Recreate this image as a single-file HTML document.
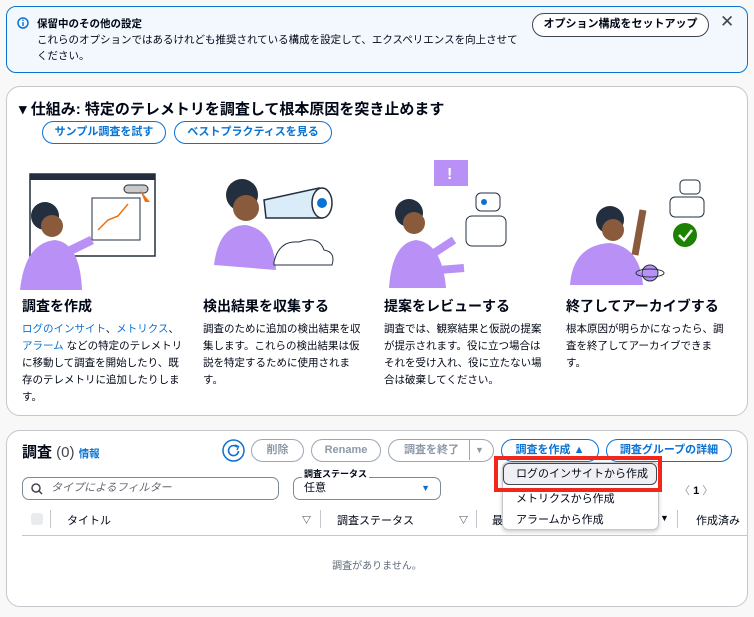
<!DOCTYPE html>
<html><head><meta charset="utf-8"><style>
*{box-sizing:border-box;margin:0;padding:0}
body{width:754px;height:617px;background:#f8f8f8;font-family:"Liberation Sans","Noto Sans CJK JP",sans-serif;color:#000716;position:relative;overflow:hidden}
.abs{position:absolute}
.banner{left:6px;top:6px;width:742px;height:67px;background:#f2f8fd;border:1px solid #0972d3;border-radius:10px}
.card{background:#fff;border:1px solid #c6c6cd;border-radius:14px}
.btn{position:absolute;border:1.5px solid #0972d3;color:#0972d3;border-radius:16px;font-size:11px;font-weight:bold;text-align:center;background:#fff;height:23px;line-height:20px}
.dis{border-color:#9ba7b6;color:#8d99a8;font-weight:bold}
.t{font-size:14px;font-weight:bold;position:absolute}
.d{font-size:10.5px;line-height:17px;position:absolute;width:165px;color:#000716}
a{color:#0972d3;text-decoration:none}
</style></head><body>
<div class="abs banner"></div>
<svg class="abs" style="left:17px;top:17px" width="12" height="12"><circle cx="6" cy="6" r="5" fill="none" stroke="#0972d3" stroke-width="1.5"/><rect x="5.3" y="5" width="1.4" height="4" fill="#0972d3"/><rect x="5.3" y="2.6" width="1.4" height="1.4" fill="#0972d3"/></svg>
<div class="abs" style="left:37px;top:16px;font-size:10.5px;font-weight:bold">保留中のその他の設定</div>
<div class="abs" style="left:37px;top:32px;font-size:10.5px;line-height:16px;white-space:nowrap">これらのオプションではあるけれども推奨されている構成を設定して、エクスペリエンスを向上させて<br>ください。</div>
<div class="abs" style="left:532px;top:13px;width:177px;height:24px;border:1.5px solid #424650;border-radius:14px;font-size:11px;font-weight:bold;text-align:center;line-height:21px;color:#000716;background:#fff">オプション構成をセットアップ</div>
<div class="abs" style="left:720px;top:12px;font-size:17px;color:#424650">✕</div>

<div class="abs card" style="left:6px;top:86px;width:742px;height:330px"></div>
<div class="abs" style="left:19px;top:98px;font-size:15px;font-weight:bold">▾ 仕組み: 特定のテレメトリを調査して根本原因を突き止めます</div>
<div class="btn" style="left:42px;top:121px;width:124px">サンプル調査を試す</div>
<div class="btn" style="left:174px;top:121px;width:158px">ベストプラクティスを見る</div>

<svg class="abs" style="left:20px;top:168px" width="165" height="122">
<rect x="10" y="6" width="125" height="82" fill="#fff" stroke="#232f3e" stroke-width="1.5"/><rect x="10" y="6" width="125" height="6" fill="#232f3e"/>
<rect x="104" y="17" width="24" height="8" rx="4" fill="#c9c9c9" stroke="#232f3e"/>
<rect x="72" y="30" width="48" height="42" fill="#fff" stroke="#232f3e"/><polyline points="78,62 88,52 98,48 108,36" fill="none" stroke="#ec7211" stroke-width="1.5"/>
<path d="M120 22 l10 12 -5 0 z" fill="#ec7211"/>
<circle cx="25" cy="48" r="14" fill="#232f3e"/><circle cx="32" cy="58" r="11" fill="#8a5a3c"/>
<path d="M0 122 Q5 75 35 72 Q60 75 62 122z" fill="#b990f5"/>
<path d="M45 85 L72 72" stroke="#b990f5" stroke-width="9"/>
</svg>
<svg class="abs" style="left:204px;top:170px" width="165" height="125">
<circle cx="38" cy="25" r="16" fill="#232f3e"/><circle cx="42" cy="38" r="13" fill="#8a5a3c"/>
<path d="M60 30 L115 18 L118 48 L62 48z" fill="#d9ecf7" stroke="#232f3e" stroke-width="1.5"/>
<ellipse cx="118" cy="33" rx="10" ry="15" fill="#fff" stroke="#232f3e" stroke-width="1.5"/><circle cx="118" cy="33" r="5" fill="#0972d3"/>
<path d="M10 95 Q15 55 42 55 Q70 60 72 100z" fill="#b990f5"/>
<path d="M70 92 Q75 70 95 72 Q115 65 120 80 Q132 82 128 95 L70 95z" fill="#fff" stroke="#232f3e"/>
</svg>
<svg class="abs" style="left:384px;top:158px" width="170" height="135">
<rect x="50" y="2" width="34" height="26" fill="#b990f5"/><text x="63" y="21" font-size="16" fill="#fff" font-weight="bold">!</text>
<rect x="92" y="35" width="24" height="18" rx="5" fill="#fff" stroke="#232f3e"/><rect x="82" y="58" width="40" height="30" rx="6" fill="#fff" stroke="#232f3e"/><circle cx="100" cy="44" r="3" fill="#0972d3"/>
<circle cx="25" cy="55" r="14" fill="#232f3e"/><circle cx="30" cy="65" r="11" fill="#8a5a3c"/>
<path d="M5 130 Q8 85 32 82 Q58 85 62 130z" fill="#b990f5"/>
<path d="M50 95 L70 82 M55 112 L80 110" stroke="#b990f5" stroke-width="8"/>
</svg>
<svg class="abs" style="left:565px;top:175px" width="170" height="118">
<rect x="115" y="5" width="20" height="14" rx="4" fill="#fff" stroke="#232f3e"/><rect x="105" y="22" width="34" height="20" rx="5" fill="#fff" stroke="#232f3e"/>
<circle cx="120" cy="60" r="12" fill="#1d8102"/><polyline points="114,60 119,65 127,55" fill="none" stroke="#fff" stroke-width="2.5"/>
<circle cx="45" cy="45" r="14" fill="#232f3e"/><circle cx="48" cy="55" r="11" fill="#8a5a3c"/>
<path d="M5 110 Q8 70 45 68 Q75 72 78 110z" fill="#b990f5"/>
<path d="M70 80 L78 35" stroke="#8a5a3c" stroke-width="7"/>
<circle cx="85" cy="98" r="8" fill="#b990f5" stroke="#232f3e"/><ellipse cx="85" cy="98" rx="14" ry="4" fill="none" stroke="#232f3e"/>
</svg>

<div class="t" style="left:22px;top:296px">調査を作成</div>
<div class="t" style="left:203px;top:296px">検出結果を収集する</div>
<div class="t" style="left:384px;top:296px">提案をレビューする</div>
<div class="t" style="left:566px;top:296px">終了してアーカイブする</div>
<div class="d" style="left:22px;top:321px"><a>ログのインサイト</a>、<a>メトリクス</a>、<br><a>アラーム</a> などの特定のテレメトリに移動して調査を開始したり、既存のテレメトリに追加したりします。</div>
<div class="d" style="left:203px;top:321px">調査のために追加の検出結果を収集します。これらの検出結果は仮説を特定するために使用されます。</div>
<div class="d" style="left:384px;top:321px">調査では、観察結果と仮説の提案が提示されます。役に立つ場合はそれを受け入れ、役に立たない場合は破棄してください。</div>
<div class="d" style="left:566px;top:321px">根本原因が明らかになったら、調査を終了してアーカイブできます。</div>

<div class="abs card" style="left:6px;top:430px;width:742px;height:177px"></div>
<div class="abs" style="left:22px;top:441px;font-size:15px;font-weight:bold">調査 <span style="font-weight:normal;color:#424650">(0)</span> <a style="font-size:10.5px;font-weight:bold">情報</a></div>
<svg class="abs" style="left:222px;top:439px" width="23" height="23"><circle cx="11.5" cy="11.5" r="10.5" fill="#fff" stroke="#0972d3" stroke-width="1.5"/><path d="M15 8 A5 5 0 1 0 16.5 12" fill="none" stroke="#0972d3" stroke-width="1.6"/><path d="M13 6 L16.5 7.5 L15 11" fill="none" stroke="#0972d3" stroke-width="1.4"/></svg>
<div class="btn dis" style="left:251px;top:439px;width:53px">削除</div>
<div class="btn dis" style="left:311px;top:439px;width:70px">Rename</div>
<div class="btn dis" style="left:388px;top:439px;width:106px;text-align:left;padding-left:15px">調査を終了<span style="position:absolute;left:80px;top:0;height:20px;border-left:1px solid #9ba7b6;padding-left:5px;font-size:9px">▼</span></div>
<div class="btn" style="left:501px;top:439px;width:98px">調査を作成 ▲</div>
<div class="btn" style="left:606px;top:439px;width:126px">調査グループの詳細</div>

<div class="abs" style="left:22px;top:477px;width:257px;height:23px;border:1px solid #7d8998;border-radius:7px;font-size:11px;font-style:italic;color:#656871;line-height:21px;padding-left:28px">タイプによるフィルター</div>
<svg class="abs" style="left:31px;top:483px" width="12" height="12"><circle cx="5" cy="5" r="4" fill="none" stroke="#424650" stroke-width="1.5"/><line x1="8" y1="8" x2="11" y2="11" stroke="#424650" stroke-width="1.5"/></svg>
<div class="abs" style="left:293px;top:477px;width:148px;height:23px;border:1px solid #7d8998;border-radius:7px;font-size:11px;line-height:21px;padding-left:10px">任意<span style="position:absolute;right:10px;color:#0972d3;font-size:9px">▼</span></div>
<div class="abs" style="left:302px;top:467px;font-size:9px;font-weight:bold;background:#fff;padding:0 2px">調査ステータス</div>
<div class="abs" style="left:679px;top:482px;font-size:11px;color:#8d99a8">〈 <b style="color:#000716">1</b> 〉</div>

<div class="abs" style="left:31px;top:513px;width:12px;height:12px;background:#e9ebed;border-radius:3px"></div>
<div class="abs" style="left:50px;top:510px;height:18px;border-left:1px solid #c6c6cd"></div>
<div class="abs" style="left:67px;top:512px;font-size:11px">タイトル</div>
<div class="abs" style="left:302px;top:513px;font-size:9px">▽</div>
<div class="abs" style="left:320px;top:510px;height:18px;border-left:1px solid #c6c6cd"></div>
<div class="abs" style="left:337px;top:512px;font-size:11px">調査ステータス</div>
<div class="abs" style="left:459px;top:513px;font-size:9px">▽</div>
<div class="abs" style="left:476px;top:510px;height:18px;border-left:1px solid #c6c6cd"></div>
<div class="abs" style="left:492px;top:512px;font-size:11px">最</div>
<div class="abs" style="left:660px;top:513px;font-size:9px">▼</div>
<div class="abs" style="left:677px;top:510px;height:18px;border-left:1px solid #c6c6cd"></div>
<div class="abs" style="left:696px;top:512px;font-size:11px">作成済み</div>
<div class="abs" style="left:22px;top:535px;width:726px;border-top:1px solid #c6c6cd"></div>
<div class="abs" style="left:0;width:754px;top:557px;font-size:10px;color:#5f6b7a;text-align:center">調査がありません。</div>

<div class="abs" style="left:502px;top:462px;width:157px;height:68px;background:#fff;border:1px solid #c6c6cd;border-radius:6px;box-shadow:0 2px 4px rgba(0,0,0,.2)"></div>
<div class="abs" style="left:503px;top:463px;width:154px;height:22px;background:#f0f0f4;border:1px solid #424650;border-radius:6px;font-size:11px;line-height:20px;padding-left:12px">ログのインサイトから作成</div>
<div class="abs" style="left:516px;top:490px;font-size:11px">メトリクスから作成</div>
<div class="abs" style="left:516px;top:511px;font-size:11px">アラームから作成</div>
<div class="abs" style="left:494px;top:456px;width:168px;height:36px;border:4px solid #f2261a"></div>
</body></html>
